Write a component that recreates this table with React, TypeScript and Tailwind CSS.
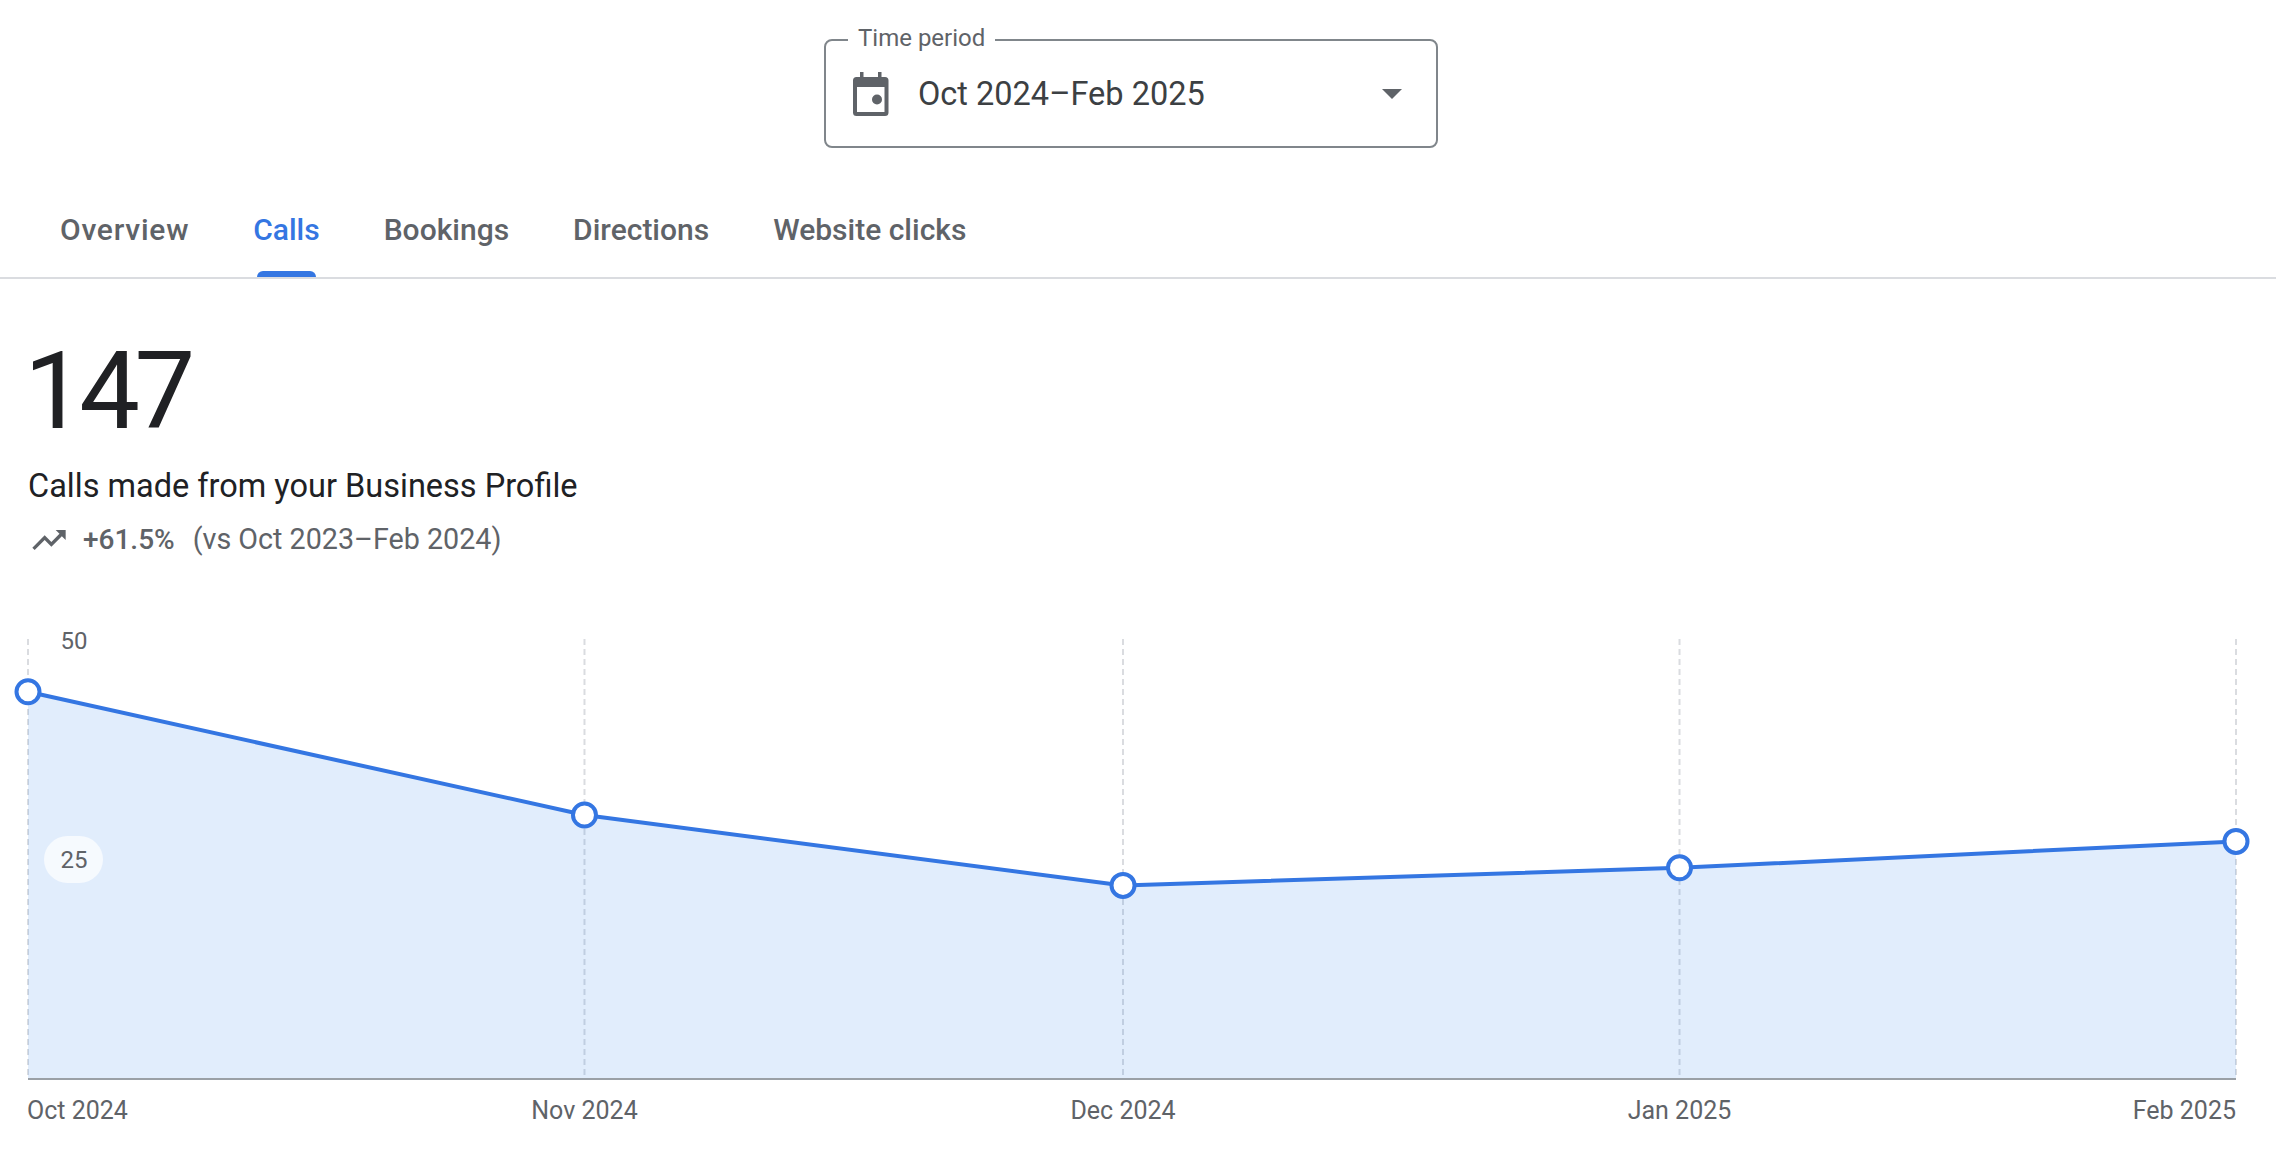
const TABS = ["Overview", "Calls", "Bookings", "Directions", "Website clicks"];

// days since Oct 1 2024 -> x in px, value -> y in px (svg space)
const POINTS = [
  { day: 0, value: 44, label: "Oct 2024", anchor: "start" as const },
  { day: 31, value: 30, label: "Nov 2024", anchor: "middle" as const },
  { day: 61, value: 22, label: "Dec 2024", anchor: "middle" as const },
  { day: 92, value: 24, label: "Jan 2025", anchor: "middle" as const },
  { day: 123, value: 27, label: "Feb 2025", anchor: "end" as const },
];

const X0 = 28;
const X1 = 2236;
const TOP = 19;
const AXIS = 459;
const px = (day: number) => X0 + (day / 123) * (X1 - X0);
const py = (v: number) => AXIS - v * ((AXIS - TOP) / 50);

const BLUE = "#3476e2";
const FONT = "Roboto, sans-serif";

function CalendarIcon() {
  return (
    <svg width="36" height="44" viewBox="0 0 36 44" className="shrink-0">
      <rect x="7" y="0" width="3.5" height="7" fill="#5f6368" />
      <rect x="25" y="0" width="3.5" height="7" fill="#5f6368" />
      <path
        fillRule="evenodd"
        fill="#5f6368"
        d="M3.5 5h28.5a3.5 3.5 0 0 1 3.5 3.5v32a3.5 3.5 0 0 1-3.5 3.5h-28.5a3.5 3.5 0 0 1-3.5-3.5v-32a3.5 3.5 0 0 1 3.5-3.5zM4 15v25h27.5v-25z"
      />
      <circle cx="24" cy="27.5" r="5" fill="#5f6368" />
    </svg>
  );
}

function TrendingUp() {
  return (
    <svg width="40" height="40" viewBox="0 0 24 24" className="shrink-0">
      <path
        fill="#5f6368"
        d="M16 6l2.29 2.29-4.88 4.88-4-4L2 16.59 3.41 18l6-6 4 4 6.3-6.29L22 12V6z"
      />
    </svg>
  );
}

function Chart() {
  const pts = POINTS.map((p) => [px(p.day), py(p.value)] as const);
  const line = pts.map(([x, y]) => `${x},${y}`).join(" ");
  const area = `${X0},${AXIS - 1} ${line} ${X1},${AXIS - 1}`;

  return (
    <svg width="2276" height="530" className="block">
      {POINTS.map((p) => (
        <line
          key={p.label}
          x1={px(p.day)}
          x2={px(p.day)}
          y1={TOP}
          y2={AXIS}
          stroke="#dadce0"
          strokeWidth="2"
          strokeDasharray="6 4"
        />
      ))}
      <polygon points={area} fill="#1a73e8" fillOpacity="0.13" />
      <line x1={X0} x2={X1} y1={AXIS} y2={AXIS} stroke="#9aa0a6" strokeWidth="2" />
      <polyline points={line} fill="none" stroke={BLUE} strokeWidth="4" strokeLinejoin="round" />
      {pts.map(([x, y], i) => (
        <circle key={i} cx={x} cy={y} r="11.5" fill="#fff" stroke={BLUE} strokeWidth="4" />
      ))}

      {/* y axis labels */}
      <text x="74" y="21" textAnchor="middle" dominantBaseline="central" fontFamily={FONT} fontSize="24" fill="#5f6368">
        50
      </text>
      <rect x="44" y="216" width="59" height="47" rx="23.5" fill="#fff" fillOpacity="0.7" />
      <text x="74" y="240" textAnchor="middle" dominantBaseline="central" fontFamily={FONT} fontSize="24" fill="#5f6368">
        25
      </text>

      {/* x axis labels */}
      {POINTS.map((p) => (
        <text
          key={p.label}
          x={p.anchor === "start" ? px(p.day) - 1 : px(p.day)}
          y="490"
          textAnchor={p.anchor}
          dominantBaseline="central"
          fontFamily={FONT}
          fontSize="25"
          fill="#5f6368"
        >
          {p.label}
        </text>
      ))}
    </svg>
  );
}

export default function App() {
  return (
    <div className="w-full min-h-screen bg-white font-[Roboto,sans-serif] overflow-hidden">
      {/* Time period selector */}
      <div className="flex justify-center pt-[39px] pr-[14px]">
        <div className="relative flex items-center w-[614px] h-[109px] border-2 border-[#80868b] rounded-[8px] pl-[27px] pr-[34px]">
          <span className="absolute -top-[17px] left-[22px] bg-white px-[10px] text-[24px] leading-[28px] text-[#5f6368]">
            Time period
          </span>
          <CalendarIcon />
          <span className="ml-[29px] text-[32.5px] leading-[40px] text-[#3c4043]">Oct 2024–Feb 2025</span>
          <svg width="20" height="10" viewBox="0 0 20 10" className="ml-auto">
            <path d="M0 0h20L10 10z" fill="#5f6368" />
          </svg>
        </div>
      </div>

      {/* Tabs */}
      <div className="mt-[33px] flex pl-[28px] border-b-2 border-[#dadce0]">
        {TABS.map((t) => {
          const active = t === "Calls";
          return (
            <div
              key={t}
              className={`relative h-[96px] px-[32px] flex items-center text-[30px] font-medium ${
                active ? "text-[#3476e2]" : "text-[#5f6368]"
              } ${t === "Overview" ? "tracking-[0.75px]" : ""}`}
            >
              {t}
              {active && (
                <span className="absolute bottom-0 left-[36px] right-[36px] h-[6px] rounded-t-[6px] bg-[#3476e2]" />
              )}
            </div>
          );
        })}
      </div>

      {/* Summary */}
      <div className="pl-[28px]">
        <div className="mt-[58px] -ml-[4px] text-[108px] leading-[108px] tracking-[-5.5px] text-[#202124]">147</div>
        <div className="mt-[21px] text-[32.5px] leading-[40px] text-[#202124]">Calls made from your Business Profile</div>
        <div className="mt-[14px] flex items-center h-[40px] text-[28px] text-[#5f6368]">
          <span className="ml-[1px]">
            <TrendingUp />
          </span>
          <span className="ml-[14px] font-medium">+61.5%</span>
          <span className="ml-[18px] text-[28.7px]">(vs Oct 2023–Feb 2024)</span>
        </div>
      </div>

      {/* Chart */}
      <div className="mt-[60px]">
        <Chart />
      </div>
    </div>
  );
}
